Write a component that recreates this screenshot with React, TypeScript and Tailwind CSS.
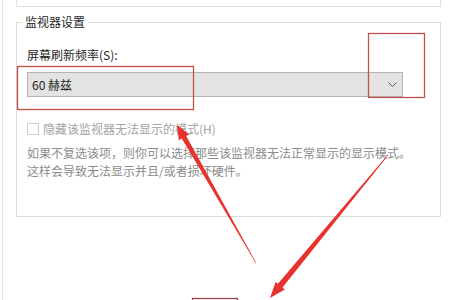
import React from "react";

// ANNOTATION OVERLAY ----------------------
const Annotations = () => (
  <svg
    className="absolute inset-0 pointer-events-none"
    width={453}
    height={300}
    viewBox="0 0 453 300"
  >
    <rect x={17.5} y={66.5} width={176} height={43} fill="none" stroke="#c0504d" strokeWidth={1.3} />
    <rect x={368.5} y={33.5} width={56} height={64} fill="none" stroke="#c0504d" strokeWidth={1.3} />
    <rect x={192.5} y={298.5} width={45} height={10} fill="none" stroke="#9e4a4a" strokeWidth={1.3} />
    <polygon
      fill="#e8322e"
      points="177,125 189.2,134.2 186.2,136 256.3,262.9 255.7,263.1 181.8,138.4 178.8,140.2"
    />
    <polygon
      fill="#e8322e"
      points="270,298 275.6,281.9 277.9,283.8 387.7,154.75 388.3,155.25 282.5,287.6 284.8,289.5"
    />
  </svg>
);

export default function App() {
  return (
    <div
      className="relative w-[453px] h-[300px] overflow-hidden bg-white text-[12px]"
      style={{ fontFamily: '"Noto Sans CJK SC", "Noto Sans", sans-serif' }}
    >
      <div className="h-full pl-[2px]">
        <div className="h-full border-l border-[#e4e4e4] pl-[13px]">
          {/* TOP BOX */}
          <div className="h-[7px] w-[425px] border-x border-b border-[#e0e0e0]" />

          {/* MONITOR GROUP */}
          <div className="mt-[15px] h-[195px] w-[425px] border border-[#dcdcdc] pl-[10px]">
            <div className="-mt-[8px] -ml-[5px] w-fit bg-white px-[3px] leading-[14px] text-[#1e1e1e]">
              监视器设置
            </div>

            <div className="mt-[19px] leading-[14px] text-[#1e1e1e]">屏幕刷新频率(S):</div>

            {/* SELECT */}
            <div className="mt-[10px] flex h-[25px] w-[376px] items-center justify-between border border-[#b4b4b4] bg-[#e3e3e3] pl-[4px] pr-[5px] text-[#1e1e1e]">
              <span className="leading-[14px]">60 赫兹</span>
              <svg width="9" height="5" viewBox="0 0 9 5">
                <path d="M0.5 0.5 L4.5 4.5 L8.5 0.5" fill="none" stroke="#5a5a5a" strokeWidth="1" />
              </svg>
            </div>

            {/* CHECKBOX */}
            <div className="mt-[25px] flex h-[13px] items-center gap-[4px]">
              <div className="h-[12px] w-[12px] border border-[#cfcfcf] bg-white" />
              <span className="leading-[14px] text-[#a3a3a3]">隐藏该监视器无法显示的模式(H)</span>
            </div>

            {/* DESCRIPTION */}
            <div className="mt-[9px] leading-[18px] text-[#8c8c8c]">
              <div>如果不复选该项，则你可以选择那些该监视器无法正常显示的显示模式。</div>
              <div>这样会导致无法显示并且/或者损坏硬件。</div>
            </div>
          </div>
        </div>
      </div>

      <Annotations />
    </div>
  );
}
